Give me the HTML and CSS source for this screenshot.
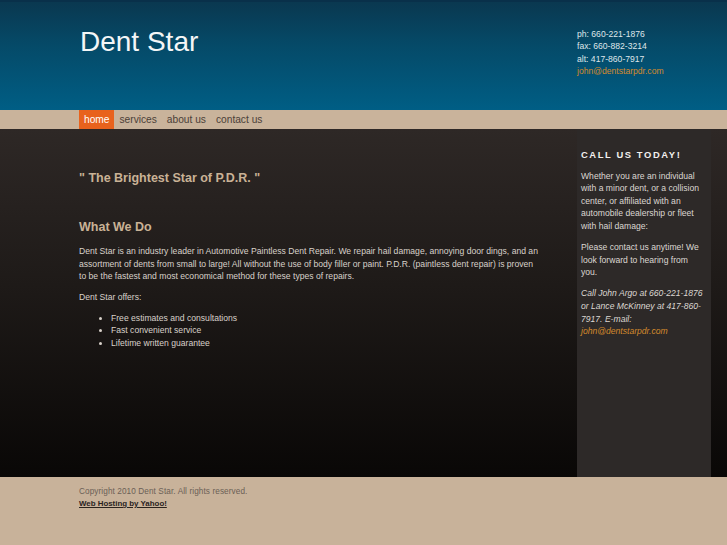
FILE: index.html
```html
<!DOCTYPE html>
<html lang="en">
<head>
<meta charset="utf-8">
<title>Dent Star</title>
<link rel="stylesheet" href="styles.css">
</head>
<body>
<header class="masthead">
  <div class="wrap head-inner">
    <h1 class="logo">Dent Star</h1>
    <div class="contact">
      <div>ph: 660-221-1876</div>
      <div>fax: 660-882-3214</div>
      <div>alt: 417-860-7917</div>
      <div><a class="mail" href="#">john@dentstarpdr.com</a></div>
    </div>
  </div>
</header>
<nav class="navbar">
  <div class="wrap">
    <ul class="menu">
      <li><a class="active" href="#">home</a></li>
      <li><a href="#">services</a></li>
      <li><a href="#">about us</a></li>
      <li><a href="#">contact us</a></li>
    </ul>
  </div>
</nav>
<div class="main">
  <div class="wrap main-inner">
    <div class="content">
      <h2 class="slogan">" The Brightest Star of P.D.R. "</h2>
      <h3 class="section-title">What We Do</h3>
      <p>Dent Star is an industry leader in Automotive Paintless Dent Repair. We repair hail damage, annoying door dings, and an assortment of dents from small to large! All without the use of body filler or paint. P.D.R. (paintless dent repair) is proven to be the fastest and most economical method for these types of repairs.</p>
      <p>Dent Star offers:</p>
      <ul class="offers">
        <li>Free estimates and consultations</li>
        <li>Fast convenient service</li>
        <li>Lifetime written guarantee</li>
      </ul>
    </div>
    <aside class="sidebar">
      <h4 class="side-title">CALL US TODAY!</h4>
      <p>Whether you are an individual with a minor dent, or a collision center, or affiliated with an automobile dealership or fleet with hail damage:</p>
      <p>Please contact us anytime! We look forward to hearing from you.</p>
      <p class="italic">Call John Argo at 660-221-1876 or Lance McKinney at 417-860-7917. E-mail: <a class="mail" href="#">john@dentstarpdr.com</a></p>
    </aside>
  </div>
</div>
<footer class="footer">
  <div class="wrap">
    <div class="copy">Copyright 2010 Dent Star. All rights reserved.</div>
    <div><a class="host" href="#">Web Hosting by Yahoo!</a></div>
  </div>
</footer>
</body>
</html>
```
FILE: styles.css
```css
html, body {
  margin: 0;
  padding: 0;
}
body {
  font-family: "Liberation Sans", Arial, sans-serif;
  background: #c8b29a;
  color: #d8d1ca;
}
.wrap {
  margin-left: 79px;
  width: 632px;
}
.masthead {
  height: 110px;
  background: linear-gradient(to bottom, #0a3850 0%, #054a68 40%, #005e85 100%);
  border-top: 2px solid #09304a;
  box-sizing: border-box;
}
.head-inner {
  display: flex;
  justify-content: space-between;
  align-items: flex-start;
}
.logo {
  margin: 24px 0 0 1px;
  font-size: 28px;
  line-height: 32px;
  font-weight: normal;
  color: #f4f6f7;
}
.contact {
  width: 134px;
  padding-top: 25.5px;
  font-size: 8.6px;
  line-height: 12.5px;
  color: #dfe6ea;
}
.mail {
  color: #d48a2c;
  text-decoration: none;
}
.navbar {
  height: 19px;
  background: #c9b39b;
}
.menu {
  list-style: none;
  margin: 0;
  padding: 0;
  display: flex;
}
.menu a {
  display: block;
  padding: 0 5px;
  line-height: 19px;
  font-size: 10.2px;
  color: #4b4038;
  text-decoration: none;
}
.menu a.active {
  background: #e8621d;
  color: #fff;
}
.main {
  background: linear-gradient(to bottom, #2e2826 0%, #1e1a18 45%, #090706 100%);
}
.main-inner {
  display: flex;
  justify-content: space-between;
  height: 348px;
}
.content {
  width: 462px;
  padding-top: 42px;
  font-size: 8.6px;
  line-height: 12.5px;
}
.slogan, .section-title {
  margin: 0;
  font-size: 12.5px;
  line-height: 15px;
  font-weight: bold;
  color: #c9b296;
}
.section-title {
  margin-top: 34px;
  margin-bottom: 10px;
}
.content p {
  margin: 0 0 8.4px;
}
.offers {
  margin: 0;
  padding-left: 32px;
}
.sidebar {
  width: 134px;
  box-sizing: border-box;
  padding: 20px 7px 0 4px;
  background: #2d2928;
  font-size: 8.6px;
  line-height: 12.6px;
  color: #dcd7d2;
}
.side-title {
  margin: 0 0 8.5px;
  font-size: 9.4px;
  line-height: 12px;
  letter-spacing: 1.6px;
  font-weight: bold;
  color: #f2f0ee;
}
.sidebar p {
  margin: 0 0 8.6px;
}
.italic {
  font-style: italic;
}
.footer {
  height: 68px;
  background: #c8b29a;
  padding-top: 8.6px;
  box-sizing: border-box;
  font-size: 8.2px;
  line-height: 12.4px;
}
.copy {
  color: #6b6056;
  letter-spacing: 0.1px;
}
.host {
  color: #2a231e;
  font-weight: bold;
  font-size: 7.9px;
}
```
